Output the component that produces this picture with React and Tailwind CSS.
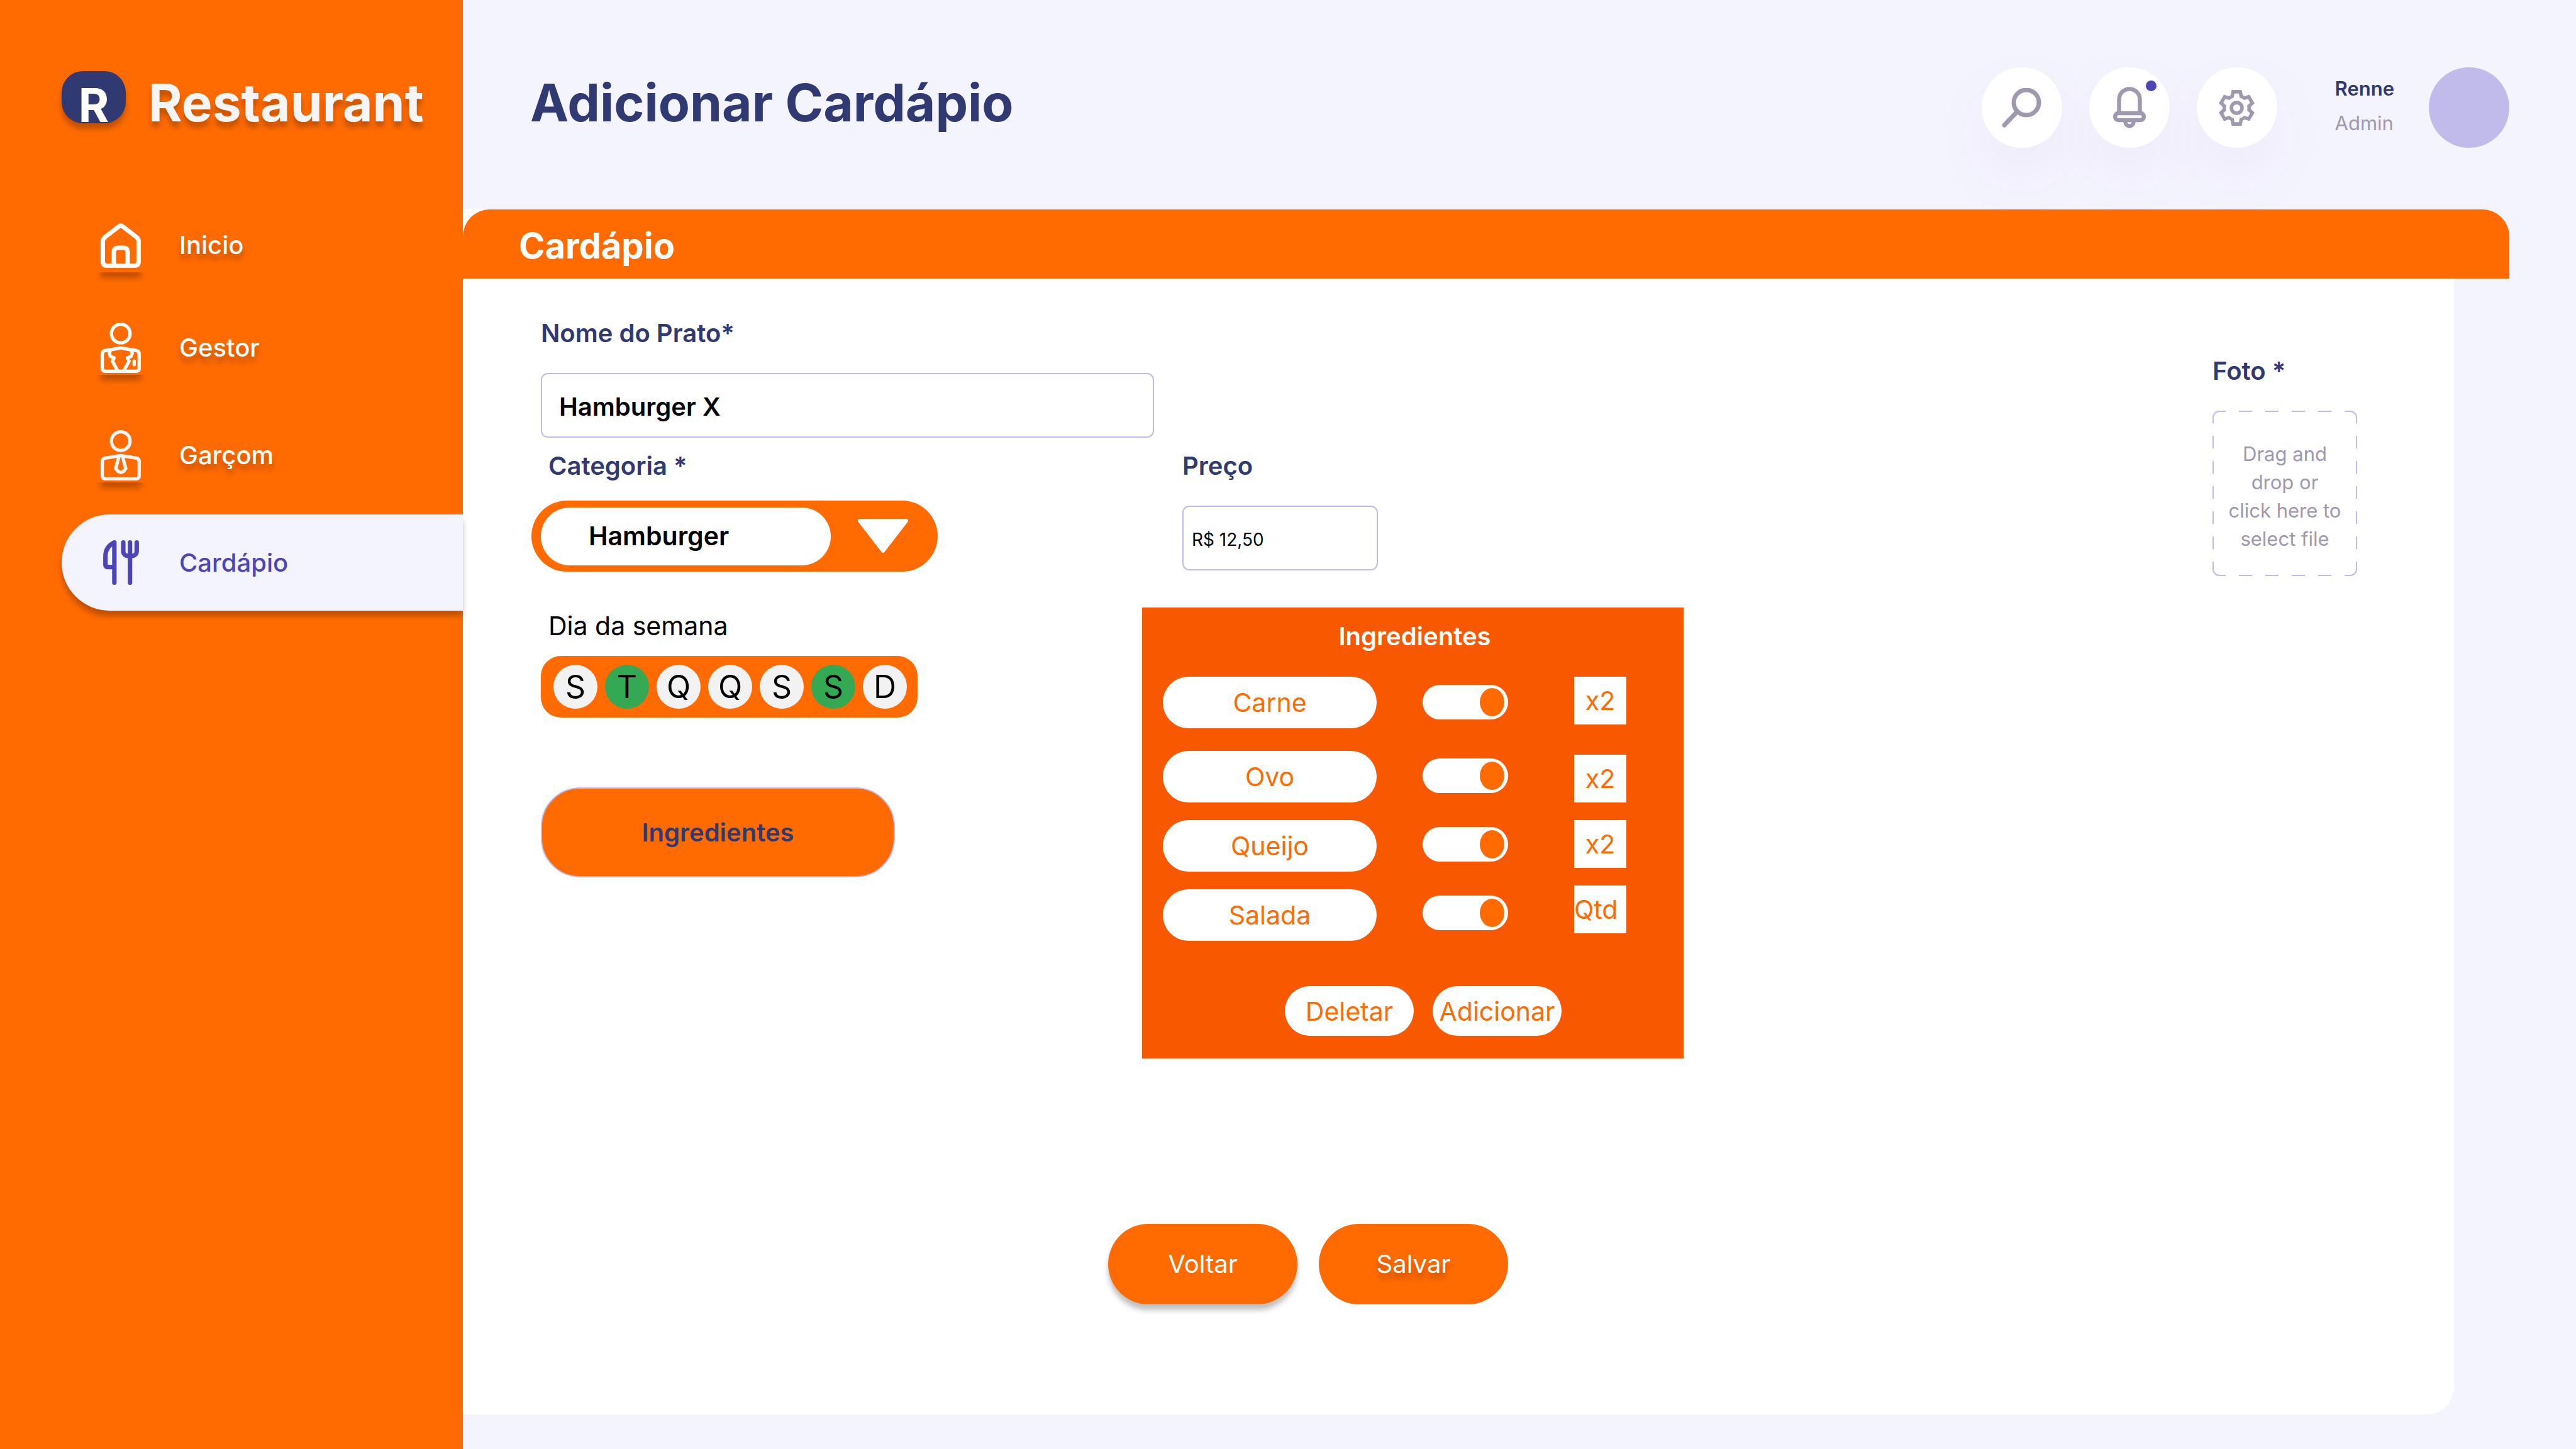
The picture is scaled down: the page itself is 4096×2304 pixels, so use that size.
import React from "react";

const navShadow = "[text-shadow:0_9px_9px_rgba(0,0,0,0.25)]";

function HomeIcon() {
  return (
    <svg viewBox="0 0 64 71" className="h-[71px] w-16" fill="none" stroke="#fff" strokeWidth="7" strokeLinejoin="round">
      <path d="M35 5L57 22Q60.500 25 60.500 29V60Q60.500 67.500 54 67.500H10Q3.500 67.500 3.500 60V29Q3.500 25 7 22L29 5Q32 2.500 35 5Z" />
      <path d="M21 67V46Q21 39 28 39H36Q43 39 43 46V67" />
    </svg>
  );
}

const BODY =
  "M230 297Q240 295 250 297L380 319Q405 325 405 350V474Q405 504 375 504H105Q75 504 75 474V350Q75 325 100 319Z";

function ManagerIcon() {
  return (
    <svg viewBox="60 69 360 450" className="h-20 w-16" fill="none" stroke="#fff" strokeWidth="30" strokeLinejoin="round" strokeLinecap="round">
      <circle cx="240" cy="167" r="83" />
      <path d={BODY} />
      <path d="M145 324L137 341L147 370L180 384L166 413L210 496" />
      <path d="M335 324L343 341L333 370L300 384L314 413L270 496" />
      <path d="M360 413V445" />
    </svg>
  );
}

function WaiterIcon() {
  return (
    <svg viewBox="60 69 360 450" className="h-20 w-16" fill="none" stroke="#f5f5f5" strokeWidth="30" strokeLinejoin="round">
      <circle cx="240" cy="167" r="83" />
      <path d={BODY} />
      <path d="M225 300L195 412L216 438L240 447L264 438L285 412L255 300" />
    </svg>
  );
}

function CutleryIcon() {
  return (
    <svg viewBox="80 64 320 400" className="h-[71px] w-[57px]" fill="none" stroke="#4d44b5" strokeWidth="40" strokeLinejoin="round" strokeLinecap="round">
      <path d="M180 444V84C130 108 100 152 100 208V284Q100 304 120 304H180" />
      <path d="M260 84V164A40 40 0 0 0 300 204H340A40 40 0 0 0 380 164V84M320 84V444" />
    </svg>
  );
}

function SearchIcon() {
  return (
    <svg viewBox="0 0 63 63" className="h-[63px] w-[63px]" fill="none" stroke="#a098ae" strokeWidth="7" strokeLinecap="round">
      <circle cx="39" cy="23" r="20" />
      <path d="M24 38L4 59" />
    </svg>
  );
}

function BellIcon() {
  return (
    <svg viewBox="0 0 52 66" className="h-[66px] w-[52px]" fill="none" stroke="#a098ae" strokeWidth="6.400">
      <path d="M9.500 42V20A16.500 16.500 0 0 1 42.500 20V42" />
      <rect x="3.200" y="42" width="45.600" height="11" rx="5" />
      <path d="M19.500 54V56A6.500 6.500 0 0 0 32.500 56V54" />
    </svg>
  );
}

function GearIcon() {
  return (
    <svg viewBox="163 138 322 323" className="h-[57px] w-[57px]">
      <path
        fill="#a098ae"
        fillRule="evenodd"
        d="M279 138H369L378 185L396 195L440 181L485 258L451 289V311L485 341L440 418L396 404L378 414L369 461H279L270 414L252 404L208 418L163 341L196 311V289L163 258L208 181L252 195L270 185ZM304 171L297 207Q275 213 257 229L222 219L203 253L230 278Q226 300 230 323L203 347L222 381L257 370Q275 387 297 393L304 428H344L351 393Q373 387 391 370L425 381L445 347L418 323Q422 300 418 278L445 253L425 219L391 229Q373 213 351 207L344 171Z"
      />
      <circle cx="324" cy="300" r="48" fill="none" stroke="#a098ae" strokeWidth="32" />
    </svg>
  );
}

/* Icon with the soft shadow that falls only beneath its box. */
function ShadowedIcon({ children, boxClass }) {
  return (
    <span className="relative block w-16">
      {children}
      <span className={`absolute -inset-x-3 h-6 overflow-hidden ${boxClass}`}>
        <span className="mx-3 -mt-10 block h-10 shadow-[0_9px_9px_rgba(0,0,0,0.25)]" />
      </span>
    </span>
  );
}

function NavItem({ icon, label, tall = true }) {
  return (
    <a
      href="#"
      className={`flex items-center gap-[61px] pl-[62px] text-[40px] leading-[58px] font-medium text-white ${navShadow} ${tall ? "h-[153px]" : "h-[136px]"}`}
    >
      {icon}
      {label}
    </a>
  );
}

function Sidebar() {
  return (
    <aside className="relative z-10 w-[736px] shrink-0 bg-[#ff6b00] pt-[113px] pl-[98px]">
      <div className="flex items-end gap-9">
        <div className="flex h-[83px] w-[102px] items-end justify-center rounded-[34px] bg-[#303972] text-[74px] leading-[58px] font-bold text-white shadow-[0_9px_9px_rgba(0,0,0,0.25)]">
          R
        </div>
        <span className={`text-[82px] leading-[64px] font-bold text-[#f5f5f5] ${navShadow}`}>Restaurant</span>
      </div>
      <nav className="mt-[126px] flex flex-col gap-[18px]">
        <NavItem label="Inicio" tall={false} icon={<ShadowedIcon boxClass="top-[78px]"><HomeIcon /></ShadowedIcon>} />
        <NavItem label="Gestor" icon={<ShadowedIcon boxClass="top-[83px]"><ManagerIcon /></ShadowedIcon>} />
        <NavItem label="Garçom" icon={<ShadowedIcon boxClass="top-[83px]"><WaiterIcon /></ShadowedIcon>} />
        <a
          href="#"
          aria-current="page"
          className="flex h-[153px] items-center gap-[61px] rounded-l-full bg-[#f3f4ff] pl-[62px] text-[40px] leading-[58px] font-medium text-[#4d44b5] shadow-[0_9px_9px_rgba(0,0,0,0.25)]"
        >
          <span className="flex w-16 justify-center">
            <CutleryIcon />
          </span>
          Cardápio
        </a>
      </nav>
    </aside>
  );
}

function RoundButton({ label, children }) {
  return (
    <button
      type="button"
      aria-label={label}
      className="relative flex h-32 w-32 items-center justify-center rounded-full bg-white shadow-[0_43px_107px_rgba(191,21,108,0.05)]"
    >
      {children}
    </button>
  );
}

function Header() {
  return (
    <header className="flex items-start justify-between pt-[107px] pr-[106px] pb-[98px] pl-[107px]">
      <h1 className="text-[82px] leading-[114px] font-bold text-[#303972]">Adicionar Cardápio</h1>
      <div className="flex items-start">
        <div className="flex gap-[43px]">
          <RoundButton label="Buscar"><SearchIcon /></RoundButton>
          <RoundButton label="Notificações">
            <BellIcon />
            <span className="absolute top-[21px] right-[21px] h-[17px] w-[17px] rounded-full bg-[#4d44b5]" />
          </RoundButton>
          <RoundButton label="Configurações"><GearIcon /></RoundButton>
        </div>
        <div className="mt-1.5 mr-[55px] ml-[92px] text-[31px] leading-[55px]">
          <p className="font-semibold text-[#303972]">Renne</p>
          <p className="text-[#a098ae]">Admin</p>
        </div>
        <div className="h-32 w-32 rounded-full bg-[#c1bbeb]" />
      </div>
    </header>
  );
}

const labelClass = "block text-[40px] leading-[58px] font-semibold text-[#303972]";
const inputClass = "block h-[103px] rounded-[11px] border-2 border-[#c1bbeb] bg-white pt-1 text-black outline-none";

const DAYS = [
  { letter: "S", name: "Segunda", on: false },
  { letter: "T", name: "Terça", on: true },
  { letter: "Q", name: "Quarta", on: false },
  { letter: "Q", name: "Quinta", on: false },
  { letter: "S", name: "Sexta", on: false },
  { letter: "S", name: "Sábado", on: true },
  { letter: "D", name: "Domingo", on: false },
];

function WeekDays() {
  return (
    <div className="mt-[19px] flex h-[98px] w-[599px] items-center justify-between rounded-[32px] bg-[#ff6b00] pr-[17px] pl-5">
      {DAYS.map((d) => (
        <button
          key={d.name}
          type="button"
          aria-label={d.name}
          aria-pressed={d.on}
          className={`flex h-[70px] w-[70px] items-center justify-center rounded-full text-[50px] leading-[58px] text-black ${d.on ? "bg-[#34a853]" : "bg-[#f2f2f2]"}`}
        >
          {d.letter}
        </button>
      ))}
    </div>
  );
}

const INGREDIENTS = [
  { name: "Carne", id: "ing-carne", qty: "x2" },
  { name: "Ovo", id: "ing-ovo", qty: "x2" },
  { name: "Queijo", id: "ing-queijo", qty: "x2" },
  { name: "Salada", id: "ing-salada", qty: "" },
];

function IngredientsPanel() {
  return (
    <section className="mt-[59px] w-[861px] bg-[#f85900] pt-[17px] pb-9 pl-[33px] text-[41px] leading-[58px] text-[#ff6b00]">
      <h3 className="pr-[27px] text-center text-[40px] leading-[58px] font-semibold text-white">Ingredientes</h3>
      <div className="mt-[35px] flex items-start">
        <div className="flex w-[340px] flex-col gap-7">
          {INGREDIENTS.map((it) => (
            <label
              key={it.id}
              htmlFor={it.id}
              className="flex h-[82px] items-center justify-center rounded-full bg-white first:mb-2"
            >
              {it.name}
            </label>
          ))}
        </div>
        <div className="ml-[73px] flex flex-col gap-[54px] pt-[13px]">
          {INGREDIENTS.map((it) => (
            <input
              key={it.id}
              id={it.id}
              type="checkbox"
              role="switch"
              defaultChecked
              className="flex h-[55px] w-[136px] appearance-none items-center justify-start rounded-full bg-white px-[6px] first:mb-2 before:block before:h-[45px] before:w-[39px] before:rounded-[50%] before:bg-[#ff6b00] checked:justify-end"
            />
          ))}
        </div>
        <div className="ml-[105px] flex flex-col gap-7">
          {INGREDIENTS.map((it) => (
            <input
              key={it.id}
              type="text"
              aria-label={`Quantidade de ${it.name}`}
              defaultValue={it.qty}
              placeholder="Qtd"
              className="block h-[76px] w-[83px] bg-white text-center outline-none placeholder-shown:text-left placeholder:text-[#ff6b00] placeholder:opacity-100 first:mb-5"
            />
          ))}
        </div>
      </div>
      <div className="mt-[72px] flex gap-[30px] pl-[194px]">
        <button type="button" className="h-[79px] w-[205px] rounded-full bg-white">Deletar</button>
        <button type="button" className="h-[79px] w-[205px] rounded-full bg-white">Adicionar</button>
      </div>
    </section>
  );
}

function PhotoDrop() {
  return (
    <div className="mt-[60px] w-[230px]">
      <span className={labelClass} id="foto-label">Foto *</span>
      <label className="relative mt-[34px] flex h-[263px] items-center justify-center pt-2 text-center text-[31px] leading-[45px] text-[#a098ae]">
        <input type="file" aria-labelledby="foto-label" className="sr-only" />
        <svg viewBox="0 0 230 263" className="absolute inset-0 h-full w-full" fill="none" stroke="#c1bbeb" strokeWidth="2">
          <path strokeDasharray="21 21" strokeDashoffset="11" d="M11 1H219" />
          <path strokeDasharray="21 21" strokeDashoffset="11" d="M11 262H219" />
          <path strokeDasharray="20 20" strokeDashoffset="11" d="M1 11V252" />
          <path strokeDasharray="20 20" strokeDashoffset="11" d="M229 11V252" />
          <path d="M1 11A10 10 0 0 1 11 1M219 1A10 10 0 0 1 229 11M229 252A10 10 0 0 1 219 262M11 262A10 10 0 0 1 1 252" />
        </svg>
        <span>
          Drag and
          <br />
          drop or
          <br />
          click here to
          <br />
          select file
        </span>
      </label>
    </div>
  );
}

function DishForm() {
  return (
    <form className="pb-[175px]">
      <div className="flex items-start justify-between pt-[58px] pr-[154px] pl-[124px]">
        <div>
          <label htmlFor="nome" className={labelClass}>Nome do Prato*</label>
          <input
            id="nome"
            type="text"
            defaultValue="Hamburger X"
            className={`${inputClass} mt-[34px] w-[975px] px-[27px] text-[40px] font-semibold`}
          />
          <div className="mt-4 flex items-start">
            <div className="w-[956px]">
              <label htmlFor="categoria" className={`${labelClass} pl-3`}>Categoria *</label>
              <div className="mt-[26px] -ml-[15px] flex h-[113px] w-[646px] items-center gap-[42px] rounded-full bg-[#ff6b00] pl-[15px]">
                <select
                  id="categoria"
                  className="h-[92px] w-[461px] appearance-none rounded-full bg-white pl-[76px] text-[41px] font-semibold text-black outline-none"
                >
                  <option>Hamburger</option>
                </select>
                <svg viewBox="0 0 82 55" className="h-[55px] w-[82px]" fill="#fff" stroke="#fff" strokeWidth="6" strokeLinejoin="round">
                  <path d="M4 3H78L41 51Z" />
                </svg>
              </div>
              <p className="mt-[57px] pl-3 text-[41px] leading-[58px] text-black">Dia da semana</p>
              <WeekDays />
              <button
                type="button"
                className="mt-[111px] block h-[143px] w-[563px] rounded-[62px] border-2 border-[#c1bbeb] bg-[#ff6b00] text-[40px] font-semibold text-[#303972]"
              >
                Ingredientes
              </button>
            </div>
            <div>
              <div className="ml-16">
                <label htmlFor="preco" className={labelClass}>Preço</label>
                <input
                  id="preco"
                  type="text"
                  defaultValue="R$ 12,50"
                  className={`${inputClass} mt-[34px] w-[311px] px-[13px] text-[28px]`}
                />
              </div>
              <IngredientsPanel />
            </div>
          </div>
        </div>
        <PhotoDrop />
      </div>
      <div className="mt-[263px] flex gap-[34px] pl-[1026px] text-[40px] text-white">
        <button type="button" className="h-32 w-[301px] rounded-full bg-[#ff6b00] shadow-[0_9px_9px_rgba(0,0,0,0.25)]">
          Voltar
        </button>
        <button type="submit" className={`h-32 w-[301px] rounded-full bg-[#ff6b00] ${navShadow}`}>
          Salvar
        </button>
      </div>
    </form>
  );
}

export default function App() {
  return (
    <div className="flex min-h-screen bg-[#f3f4ff] font-['Inter',sans-serif]">
      <Sidebar />
      <main className="flex min-w-0 flex-1 flex-col">
        <Header />
        <section className="mr-[194px] mb-[55px] flex-1 rounded-br-[43px] bg-white">
          <div className="-mr-[88px] flex h-[110px] items-center rounded-t-[43px] bg-[#ff6b00] pt-1.5 pl-[89px]">
            <h2 className="text-[56px] leading-[72px] font-bold text-white">Cardápio</h2>
          </div>
          <DishForm />
        </section>
      </main>
    </div>
  );
}
